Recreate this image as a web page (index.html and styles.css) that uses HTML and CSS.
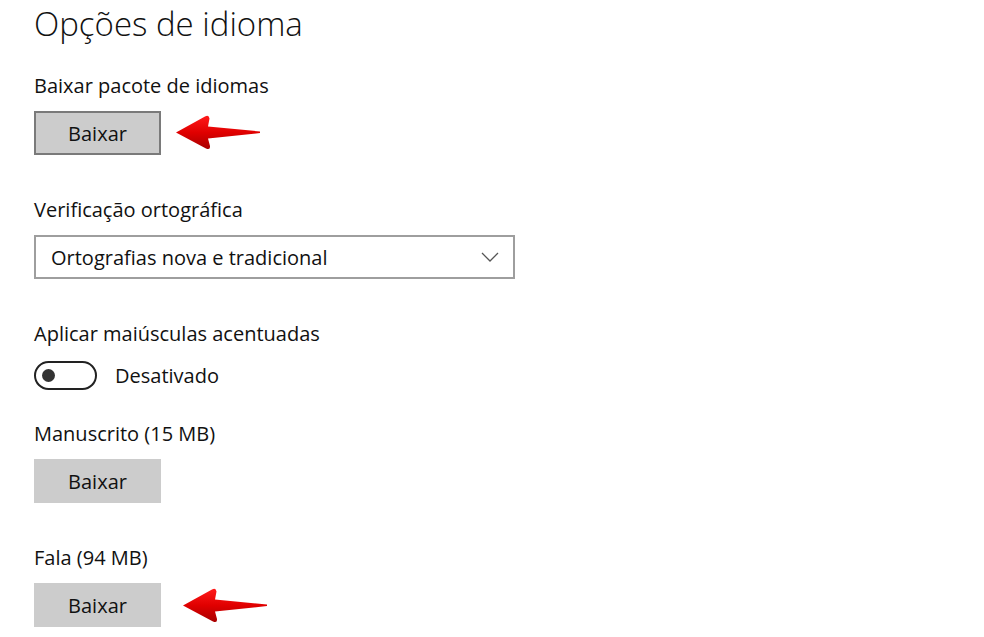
FILE: index.html
```html
<!DOCTYPE html>
<html lang="pt-BR">
<head>
<meta charset="utf-8">
<title>Opções de idioma</title>
<link rel="stylesheet" href="styles.css">
</head>
<body>
<main class="page">
  <h1 class="title">Opções de idioma</h1>

  <section class="group first">
    <div class="label">Baixar pacote de idiomas</div>
    <div class="row">
      <button class="btn btn-focus">Baixar</button>
      <svg class="arrow arrow-a" viewBox="0 0 90 40" width="90" height="40" aria-hidden="true">
        <defs>
          <linearGradient id="rg1" x1="0" y1="0" x2="0" y2="1">
            <stop offset="0" stop-color="#ff1a1a"/>
            <stop offset="0.5" stop-color="#e00000"/>
            <stop offset="1" stop-color="#a80000"/>
          </linearGradient>
        </defs>
        <path d="M4 20.5 L33 4.5 Q37 2.5 37.5 6.5 L36 14.5 L88 19.5 L88 21 L36 26.5 L38 34 Q38.5 38.5 34 36.5 Z" fill="url(#rg1)"/>
      </svg>
    </div>
  </section>

  <section class="group">
    <div class="label">Verificação ortográfica</div>
    <div class="select">
      <span class="select-text">Ortografias nova e tradicional</span>
      <svg class="chevron" viewBox="0 0 18 10" width="18" height="10" aria-hidden="true">
        <path d="M1 1 L9 9 L17 1" fill="none" stroke="#555" stroke-width="1.3"/>
      </svg>
    </div>
  </section>

  <section class="group">
    <div class="label">Aplicar maiúsculas acentuadas</div>
    <div class="toggle-row">
      <span class="toggle"><span class="knob"></span></span>
      <span class="toggle-text">Desativado</span>
    </div>
  </section>

  <section class="group after-toggle">
    <div class="label">Manuscrito (15 MB)</div>
    <div class="row">
      <button class="btn">Baixar</button>
    </div>
  </section>

  <section class="group">
    <div class="label">Fala (94 MB)</div>
    <div class="row">
      <button class="btn">Baixar</button>
      <svg class="arrow arrow-b" viewBox="0 0 90 40" width="90" height="40" aria-hidden="true">
        <defs>
          <linearGradient id="rg2" x1="0" y1="0" x2="0" y2="1">
            <stop offset="0" stop-color="#ff1a1a"/>
            <stop offset="0.5" stop-color="#e00000"/>
            <stop offset="1" stop-color="#a80000"/>
          </linearGradient>
        </defs>
        <path d="M4 20.5 L33 4.5 Q37 2.5 37.5 6.5 L36 14.5 L88 19.5 L88 21 L36 26.5 L38 34 Q38.5 38.5 34 36.5 Z" fill="url(#rg2)"/>
      </svg>
    </div>
  </section>
</main>
</body>
</html>
```

FILE: styles.css
```css
html, body {
  margin: 0;
  padding: 0;
  background: #ffffff;
}

body {
  font-family: "Open Sans", "Noto Sans", "Liberation Sans", sans-serif;
  color: #111111;
}

.page {
  padding: 0 0 0 34px;
}

.title {
  margin: 0;
  padding-top: 4px;
  font-size: 33px;
  font-weight: 300;
  line-height: 40px;
  color: #111111;
}

.group {
  margin-top: 42px;
}

.group.first {
  margin-top: 29px;
}

.group.after-toggle {
  margin-top: 31px;
}

.label {
  font-size: 20px;
  line-height: 26px;
  margin-bottom: 12px;
}

.row {
  display: flex;
  align-items: center;
}

.btn {
  box-sizing: border-box;
  width: 127px;
  height: 44px;
  border: 0;
  background: #cccccc;
  font-family: inherit;
  font-size: 20px;
  color: #111111;
  padding: 0;
}

.btn-focus {
  border: 2px solid #7a7a7a;
}

.arrow {
  display: block;
}

.arrow-a {
  margin-left: 11px;
  margin-top: -3px;
}

.arrow-b {
  margin-left: 18px;
}

.select {
  box-sizing: border-box;
  width: 481px;
  height: 44px;
  border: 2px solid #9e9e9e;
  display: flex;
  align-items: center;
  justify-content: space-between;
  padding: 0 14px 0 15px;
}

.select-text {
  font-size: 20px;
}

.chevron {
  display: block;
}

.toggle-row {
  display: flex;
  align-items: center;
  gap: 18px;
  margin-top: 14px;
}

.toggle {
  box-sizing: border-box;
  width: 63px;
  height: 29px;
  border: 2px solid #222222;
  border-radius: 15px;
  display: flex;
  align-items: center;
  padding-left: 6px;
}

.knob {
  width: 13px;
  height: 13px;
  border-radius: 50%;
  background: #333333;
}

.toggle-text {
  font-size: 20px;
}
```
